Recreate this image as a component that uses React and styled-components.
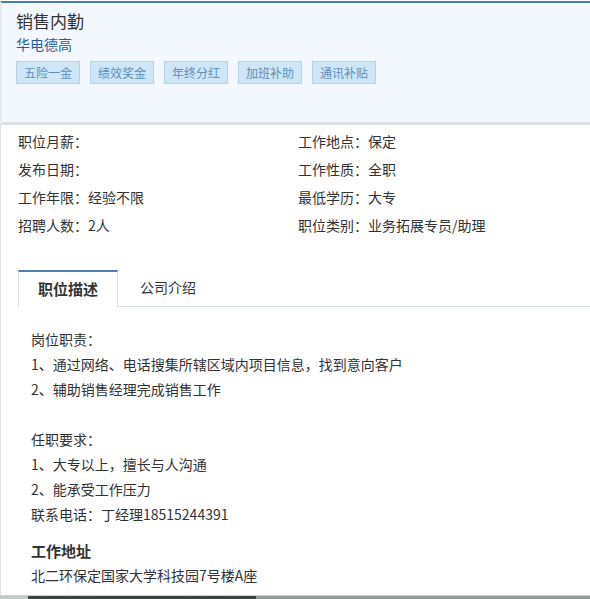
import React from "react";
import styled, { createGlobalStyle } from "styled-components";

const Global = createGlobalStyle`
  html, body { margin: 0; padding: 0; background: #ffffff; }
  body { font-family: "Noto Sans CJK SC", "Noto Sans", sans-serif; color: #333; }
  * { box-sizing: border-box; }
`;

const Page = styled.div`
  width: 590px;
  height: 599px;
  padding-top: 1px;
  overflow: hidden;
  display: flex;
  flex-direction: column;
`;

const Header = styled.header`
  height: 124px;
  flex-shrink: 0;
  background: #f3f8fe;
  border-top: 2px solid #4f7db1;
  border-left: 2px solid #e6ecf2;
  border-bottom: 3px solid #dcdfe3;
  padding: 7px 14px 0;
  display: flex;
  flex-direction: column;
`;

const Title = styled.h1`
  margin: 0;
  font-size: 17px;
  font-weight: 400;
  line-height: 22px;
  color: #333;
`;

const Company = styled.div`
  margin-top: 1px;
  font-size: 14px;
  line-height: 22px;
  color: #2a5c9c;
`;

const Tags = styled.div`
  margin-top: 6px;
  display: flex;
  gap: 10px;
`;

const Tag = styled.span`
  width: 64px;
  height: 23px;
  display: flex;
  align-items: center;
  justify-content: center;
  background: #cfe6f6;
  border: 1px solid #b4d4ea;
  color: #5b8fbd;
  font-size: 12px;
`;

const Body = styled.main`
  flex: 1;
  border-left: 1px solid #dfe3e8;
  display: flex;
  flex-direction: column;
`;

const InfoGrid = styled.div`
  padding: 2px 0 0 17px;
  display: grid;
  grid-template-columns: 280px 1fr;
`;

const InfoItem = styled.div`
  font-size: 14px;
  line-height: 28px;
  color: #333;
  white-space: nowrap;
`;

const TabBar = styled.div`
  margin: 31px 0 0 17px;
  height: 37px;
  display: flex;
  border-bottom: 1px solid #d8e0e9;
`;

const Tab = styled.div`
  width: 100px;
  height: ${(p) => (p.$active ? "37px" : "36px")};
  display: flex;
  align-items: center;
  justify-content: center;
  font-size: ${(p) => (p.$active ? "15px" : "14px")};
  font-weight: ${(p) => (p.$active ? 700 : 400)};
  color: #333;
  background: ${(p) => (p.$active ? "#ffffff" : "transparent")};
  border-top: 2px solid ${(p) => (p.$active ? "#4f7db1" : "transparent")};
  border-left: 1px solid ${(p) => (p.$active ? "#dde4ec" : "transparent")};
  border-right: 1px solid ${(p) => (p.$active ? "#dde4ec" : "transparent")};
  padding-bottom: ${(p) => (p.$active ? "2px" : "5px")};
`;

const Content = styled.div`
  padding: 20px 0 0 30px;
  font-size: 14px;
  line-height: 25px;
  color: #333;
`;

const Line = styled.div`
  min-height: 25px;
  white-space: nowrap;
`;

const SubHead = styled.div`
  margin-top: 11px;
  font-size: 15px;
  font-weight: 700;
  line-height: 25px;
  color: #333;
`;

const Footer = styled.div`
  height: 4px;
  flex-shrink: 0;
  border-top: 1px solid #c9cfcf;
  background: linear-gradient(90deg, #c2c9c8 0 28px, #3c4544 28px 256px, #8f9b99 256px 100%);
`;

const tags = ["五险一金", "绩效奖金", "年终分红", "加班补助", "通讯补贴"];

const info = [
  "职位月薪：",
  "工作地点：保定",
  "发布日期：",
  "工作性质：全职",
  "工作年限：经验不限",
  "最低学历：大专",
  "招聘人数：2人",
  "职位类别：业务拓展专员/助理",
];

const lines = [
  "岗位职责：",
  "1、通过网络、电话搜集所辖区域内项目信息，找到意向客户",
  "2、辅助销售经理完成销售工作",
  "",
  "任职要求：",
  "1、大专以上，擅长与人沟通",
  "2、能承受工作压力",
  "联系电话：丁经理18515244391",
];

export default function App() {
  return (
    <>
      <Global />
      <Page>
        <Header>
          <Title>销售内勤</Title>
          <Company>华电德高</Company>
          <Tags>
            {tags.map((t) => (
              <Tag key={t}>{t}</Tag>
            ))}
          </Tags>
        </Header>
        <Body>
          <InfoGrid>
            {info.map((t) => (
              <InfoItem key={t}>{t}</InfoItem>
            ))}
          </InfoGrid>
          <TabBar>
            <Tab $active>职位描述</Tab>
            <Tab>公司介绍</Tab>
          </TabBar>
          <Content>
            {lines.map((t, i) => (
              <Line key={i}>{t}</Line>
            ))}
            <SubHead>工作地址</SubHead>
            <Line>北二环保定国家大学科技园7号楼A座</Line>
          </Content>
        </Body>
        <Footer />
      </Page>
    </>
  );
}
